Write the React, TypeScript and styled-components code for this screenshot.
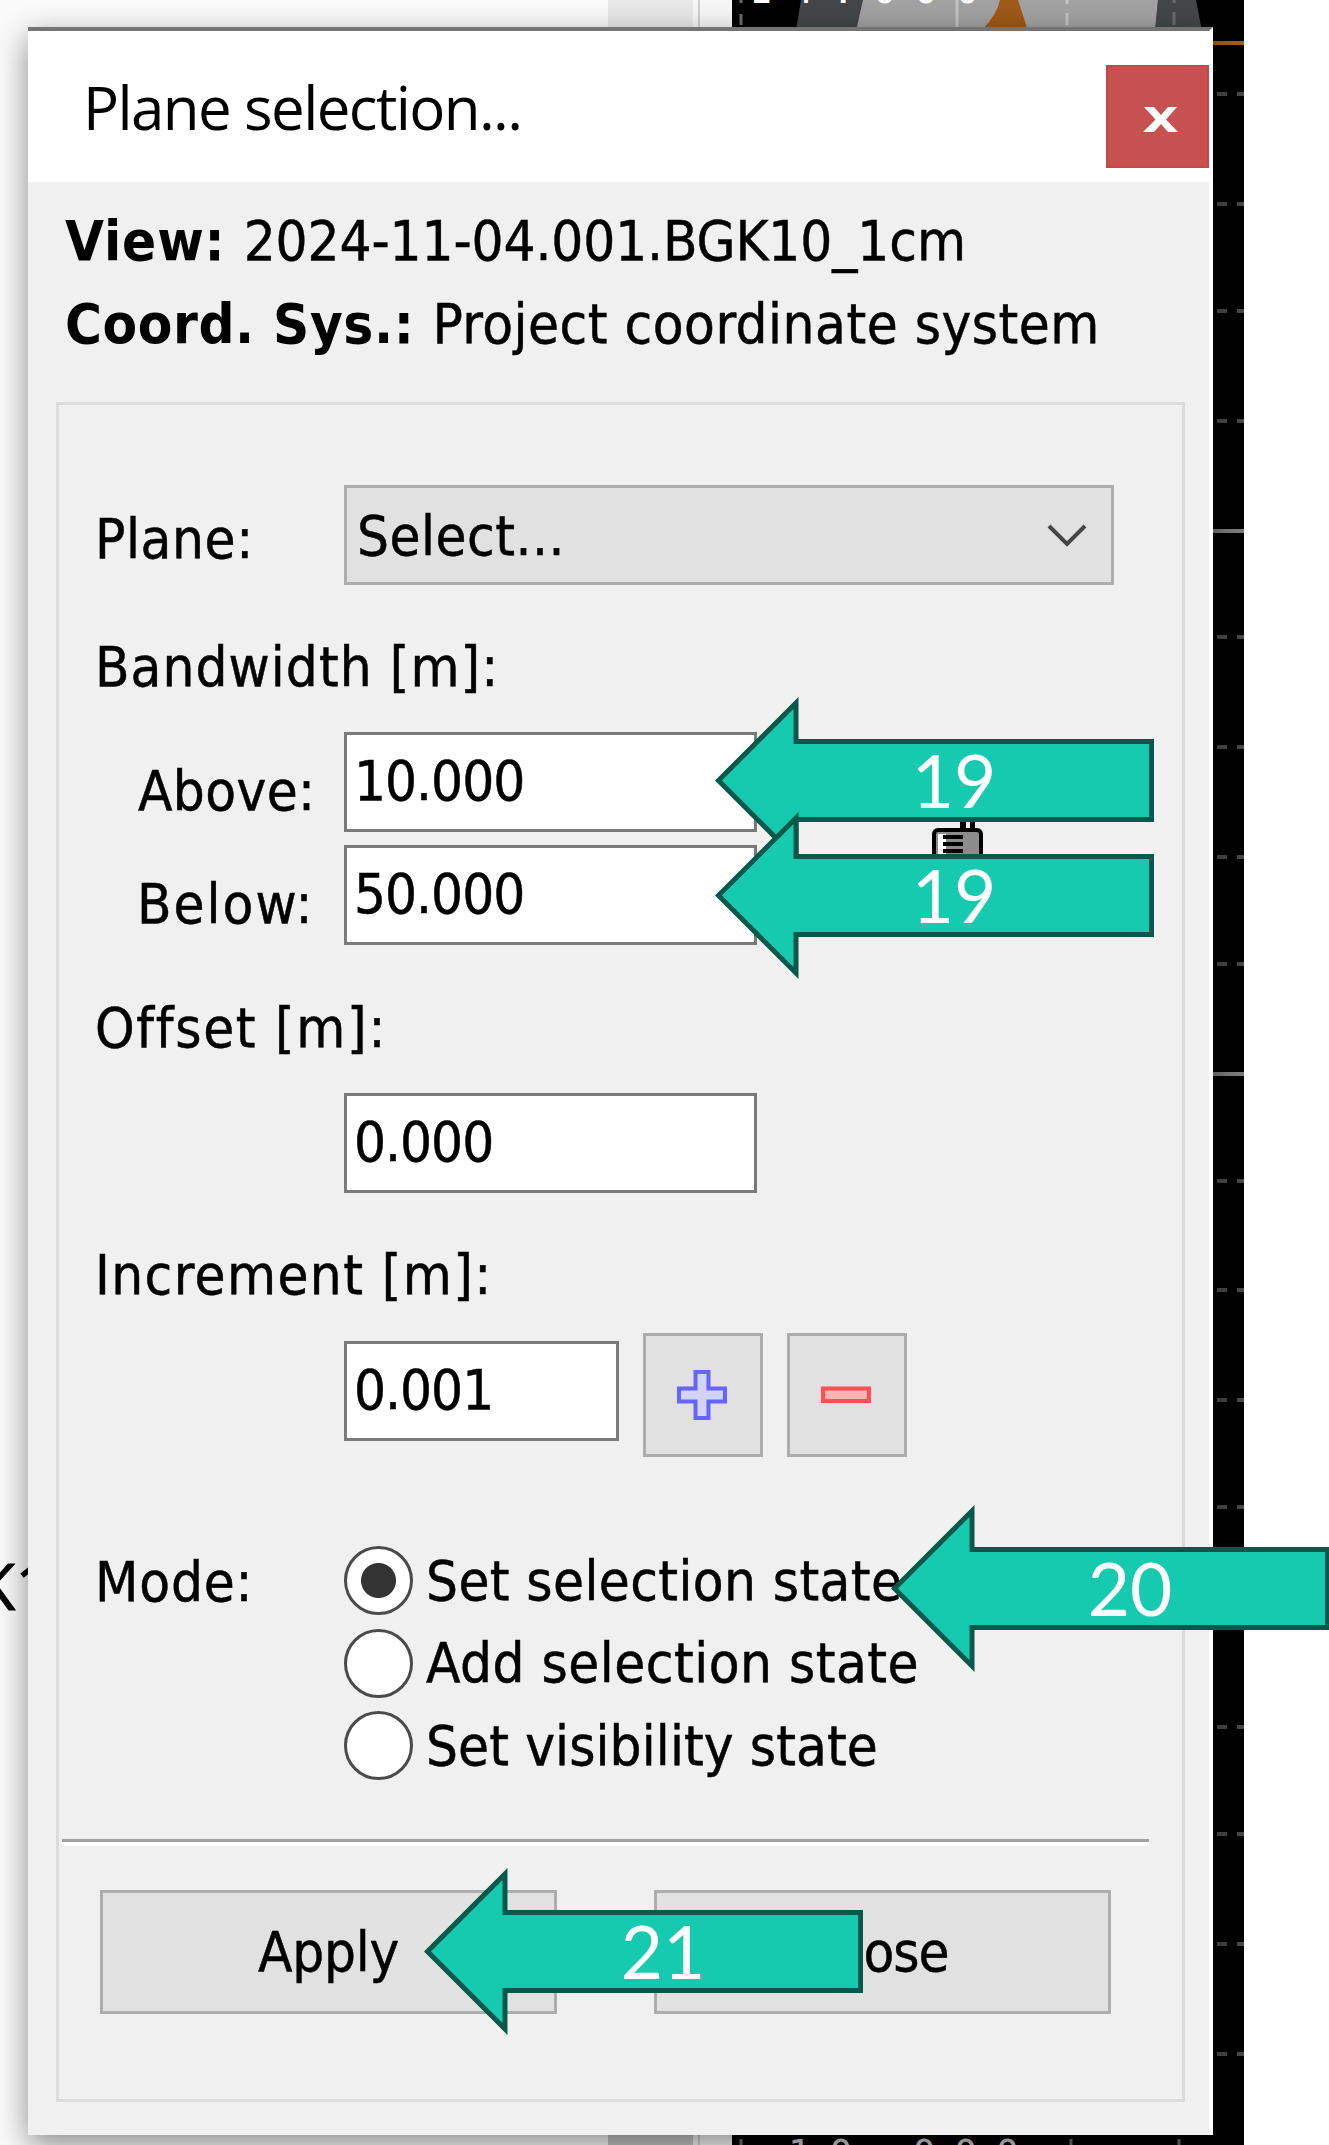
import React from 'react';
import styled, { createGlobalStyle } from 'styled-components';

const Global = createGlobalStyle`
  *{box-sizing:border-box}
  body{margin:0;background:#fff;}
`;

const Scene = styled.div`
  position: relative;
  width: 1329px;
  height: 2145px;
  overflow: hidden;
  font: 56px/68px "DejaVu Sans Condensed", "DejaVu Sans", sans-serif;
  color: #000;
  white-space: nowrap;
`;

const Backdrop = styled.svg`
  position: absolute;
  inset: 0;
`;

const Dialog = styled.section`
  position: relative;
  width: 1185px;
  height: 2108px;
  margin: 27px 0 0 28px;
  border-top: 4px solid #747474;
  border-right: 4px solid #fff;
  background: #f0f0f0;
  box-shadow: 0 10px 30px rgba(0, 0, 0, 0.45);
`;

const TitleBar = styled.header`
  display: flex;
  justify-content: space-between;
  height: 151px;
  padding: 34px 0 0 55px;
  background: #fff;
`;

const Title = styled.h1`
  margin: 1px 0 0;
  font: 400 60px/82px "Open Sans", sans-serif;
  letter-spacing: -1.6px;
`;

const CloseBox = styled.button`
  width: 103px;
  height: 103px;
  padding: 0;
  border: 2px solid #c44848;
  background: #c75050;
`;

const Info = styled.div`
  height: 220px;
  padding: 18px 0 0 37px;
  line-height: 82px;
`;

const InfoRow = styled.div`
  display: flex;
  gap: 18px;
  height: 83px;
`;

const Run = styled.span<{ $track?: number; $bold?: boolean }>`
  letter-spacing: ${(p) => p.$track ?? -1}px;
  font-weight: ${(p) => (p.$bold ? 700 : 400)};
  -webkit-text-stroke: ${(p) => (p.$bold ? 0 : 0.5)}px #000;
`;

const Group = styled.div`
  width: 1129px;
  height: 1700px;
  margin-left: 28px;
  border: 3px solid #dcdcdc;
  padding: 80px 0 0 3px;
`;

const Row = styled.div<{ $h: number; $indent?: number }>`
  display: grid;
  grid-template-columns: ${(p) => 282 - (p.$indent ?? 33)}px auto;
  height: ${(p) => p.$h}px;
  margin-left: ${(p) => p.$indent ?? 33}px;
`;

const Label = styled.label<{ $top?: number }>`
  padding-top: ${(p) => p.$top ?? 20}px;
`;

const Select = styled.div`
  display: flex;
  justify-content: space-between;
  width: 770px;
  height: 100px;
  padding: 14px 24px 0 10px;
  border: 3px solid #adadad;
  background: #e1e1e1;
`;

const Chevron = styled.svg`
  margin-top: 22px;
`;

const Field = styled.div<{ $w?: number }>`
  width: ${(p) => p.$w ?? 413}px;
  height: 100px;
  padding: 12px 0 0 7px;
  border: 3px solid #7a7a7a;
  background: #fff;
`;

const Stepper = styled.div`
  display: flex;
  align-items: flex-start;
  height: 124px;

  & > ${Field} {
    margin-top: 8px;
  }
`;

const StepButton = styled.button`
  width: 120px;
  height: 124px;
  margin-left: 24px;
  padding: 2px 2px 0 0;
  border: 3px solid #adadad;
  background: #e1e1e1;
`;

const Radios = styled.div`
  display: flex;
  flex-direction: column;
  gap: 13px;
`;

const Option = styled.div`
  display: flex;
  align-items: center;
  gap: 13px;
  height: 69.5px;
`;

const Dot = styled.span<{ $on?: boolean }>`
  width: 69px;
  height: 69px;
  border: 3px solid #4a4a4a;
  border-radius: 50%;
  background: ${(p) => (p.$on ? 'radial-gradient(circle, #333 17px, #fff 18px)' : '#fff')};
`;

const Rule = styled.hr`
  width: 1087px;
  height: 7px;
  margin: 1px 0 0;
  border: 0;
  border-top: 3px solid #a0a0a0;
  background: #fff;
`;

const Actions = styled.div`
  display: flex;
  gap: 97px;
  padding: 44px 0 0 38px;
`;

const Action = styled.button`
  width: 457px;
  height: 124px;
  padding: 0;
  border: 3px solid #adadad;
  background: #e1e1e1;
  font: inherit;
  color: #000;
`;

const Lock = styled.svg`
  position: absolute;
  left: 930px;
  top: 818px;
`;

const Callout = styled.svg<{ $x: number; $y: number }>`
  position: absolute;
  left: ${(p) => p.$x}px;
  top: ${(p) => p.$y}px;
`;

const Arrow = ({ x, y, n }: { x: number; y: number; n: number }) => (
  <Callout $x={x} $y={y} width="440" height="168">
    <path d="M3.5 83.5 81 6V44.5H436.5V122.5H81V161Z" fill="#16cab0" stroke="#04594a" strokeWidth="5" />
    <text x="239" y="110.500" textAnchor="middle" fill="#fff" fontFamily="Lato, sans-serif" fontSize="73">{n}</text>
  </Callout>
);

const ticks = [94, 204, 311, 421, 637, 747, 857, 964, 1181, 1290, 1400, 1507, 1727, 1834, 1944, 2054];

export default function App() {
  return (
    <Scene>
      <Global />
      <Backdrop width="1329" height="2145">
        <rect width="608" height="2145" fill="#fafafa" />
        <rect x="608" width="85" height="2145" fill="#e8e8e8" />
        <rect x="608" y="2130" width="85" height="15" fill="#c6c6c6" />
        <rect x="693" width="39" height="2145" fill="#f6f6f6" />
        <path d="M699 0V2145" stroke="#d0d0d0" strokeWidth="2" />
        <rect x="732" width="512" height="2145" />
        <path d="M801 0H864L856 31H796ZM1158 0H1196L1202 31H1155Z" fill="#434748" />
        <path d="M863 0H1158L1155 31H856Z" fill="#a2a2a2" />
        <path d="M1000 0H1018L1028 31H981Q997 15 1000 0Z" fill="#a05a18" />
        <path d="M957 0V27M1067 0V4M1067 13V25" stroke="#c4c4c4" strokeWidth="3" />
        <path d="M741 0V3M741 14V25M1174 0V3M1174 12V25M741 2139V2145M1071 2139V2145M1179 2139V2145" stroke="#6a6a6a" strokeWidth="3" />
        <path d="M1213 43H1244" stroke="#a85c12" strokeWidth="4" />
        {ticks.map((y) => (
          <path key={y} d={`M1217 ${y}H1227M1237 ${y}H1244`} stroke="#484848" strokeWidth="4" />
        ))}
        <path d="M1213 531H1244M1213 1074H1244" stroke="#7c7c7c" strokeWidth="4" />
        <text x="749" y="3" fill="#fff" fontSize="38" letterSpacing="18.500" fontFamily="DejaVu Sans Mono, monospace">14.000</text>
        <text x="788" y="2166" fill="#ccc" fontSize="38" letterSpacing="18.700" fontFamily="DejaVu Sans Mono, monospace">10.000</text>
        <text x="-24" y="1610" fontSize="64" fontFamily="Open Sans, sans-serif" stroke="#000">K1</text>
      </Backdrop>
      <Dialog>
        <TitleBar>
          <Title>Plane selection...</Title>
          <CloseBox aria-label="Close window">
            <svg width="99" height="99">
              <path d="M36 40H46L53 48 60 40H69L58 52.500 70 65H60L53 57 46 65H35L47.500 52.500Z" fill="#fff" />
            </svg>
          </CloseBox>
        </TitleBar>
        <Info>
          <InfoRow><Run $bold $track={0.9}>View:</Run><Run $track={-0.1}>2024-11-04.001.BGK10_1cm</Run></InfoRow>
          <InfoRow><Run $bold $track={0.6}>Coord. Sys.:</Run><Run $track={0.5}>Project coordinate system</Run></InfoRow>
        </Info>
        <Group>
          <Row $h={131}>
            <Label><Run $track={0.6}>Plane:</Run></Label>
            <Select>
              <Run $track={0.5}>Select...</Run>
              <Chevron width="40" height="24">
                <path d="M2 2 20 20 38 2" fill="none" stroke="#444" strokeWidth="4" />
              </Chevron>
            </Select>
          </Row>
          <Row $h={116}><Label $top={17}><Run $track={1.05}>Bandwidth [m]:</Run></Label></Row>
          <Row $h={113} $indent={76}><Label $top={25}><Run $track={0.4}>Above:</Run></Label><Field><Run>10.000</Run></Field></Row>
          <Row $h={131} $indent={75}><Label $top={25}><Run $track={2}>Below:</Run></Label><Field><Run>50.000</Run></Field></Row>
          <Row $h={117}><Label $top={18}><Run $track={1.7}>Offset [m]:</Run></Label></Row>
          <Row $h={131}><span /><Field><Run>0.000</Run></Field></Row>
          <Row $h={109}><Label $top={17}><Run $track={1.4}>Increment [m]:</Run></Label></Row>
          <Row $h={213}>
            <span />
            <Stepper>
              <Field $w={275}><Run>0.001</Run></Field>
              <StepButton aria-label="Increase">
                <svg width="50" height="50">
                  <path d="M18.500 2H31.500V18.500H48V31.500H31.500V48H18.500V31.500H2V18.500H18.500Z" fill="#d2d2fb" stroke="#6464ff" strokeWidth="4" />
                </svg>
              </StepButton>
              <StepButton aria-label="Decrease">
                <svg width="50" height="50">
                  <rect x="2" y="18.500" width="46" height="12.500" fill="#ffb4b4" stroke="#ff5050" strokeWidth="4" />
                </svg>
              </StepButton>
            </Stepper>
          </Row>
          <Row $h={292}>
            <Label $top={2}><Run $track={0.8}>Mode:</Run></Label>
            <Radios>
              <Option><Dot $on /><Run $track={0.4}>Set selection state</Run></Option>
              <Option><Dot /><Run $track={0.5}>Add selection state</Run></Option>
              <Option><Dot /><Run $track={0.1}>Set visibility state</Run></Option>
            </Radios>
          </Row>
          <Rule />
          <Actions>
            <Action><Run $track={-0.2}>Apply</Run></Action>
            <Action><Run>Close</Run></Action>
          </Actions>
        </Group>
      </Dialog>
      <Lock width="56" height="46">
        <path d="M30 0H36V12H30ZM40 0H45V12H40Z" />
        <rect x="4" y="12" width="47" height="40" rx="4" fill="#8c8c8c" stroke="#000" strokeWidth="4" />
        <path d="M8 16H16V46H8Z" fill="#fff" />
        <path d="M13 19H33M13 26H33M13 33H33" stroke="#000" strokeWidth="4" />
      </Lock>
      <Arrow x={715} y={697} n={19} />
      <Arrow x={715} y={811.500} n={19} />
      <Arrow x={891} y={1505} n={20} />
      <Arrow x={424} y={1868} n={21} />
    </Scene>
  );
}
